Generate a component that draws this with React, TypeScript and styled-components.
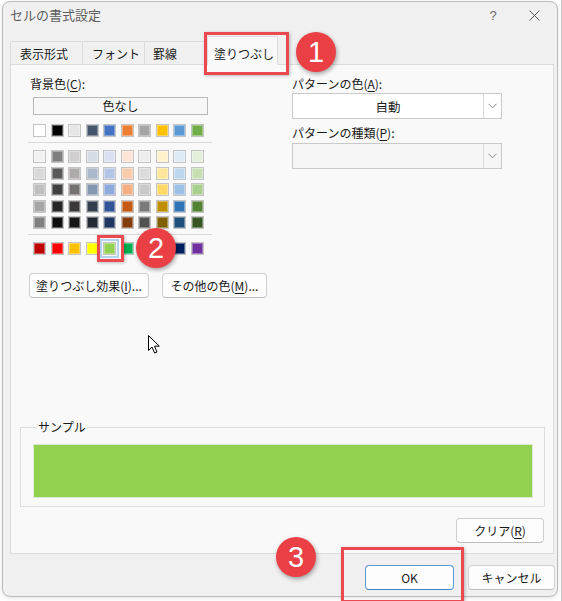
import React from "react";
import styled, { createGlobalStyle } from "styled-components";

const Global = createGlobalStyle`
  html, body { margin: 0; padding: 0; background: #ffffff; }
  body { font-family: "Noto Sans CJK JP", "Noto Sans", sans-serif; font-size: 12px; color: #1a1a1a; }
  * { box-sizing: border-box; }
`;

const Page = styled.div`
  position: relative;
  width: 562px;
  height: 601px;
  overflow: hidden;
  background: #ffffff;
`;

const EdgeLine = styled.div`
  position: absolute;
  right: 0;
  top: 0;
  width: 1px;
  height: 100%;
  background: #c8c8c8;
`;

const Dialog = styled.div`
  margin: 1px 0 0 2px;
  width: 556px;
  height: 596px;
  background: #f0f0f0;
  border: 1px solid #bcbcbc;
  border-radius: 8px;
  display: flex;
  flex-direction: column;
  box-shadow: 0 1px 4px rgba(0, 0, 0, 0.12);
`;

const TitleBar = styled.div`
  height: 26px;
  display: flex;
  align-items: center;
  padding: 0 0 0 7px;
`;

const Title = styled.div`
  flex: 1;
  font-size: 13px;
  color: #5e5e5e;
  line-height: 16px;
`;

const TitleButton = styled.div<{ $w: number }>`
  width: ${(p) => p.$w}px;
  height: 26px;
  display: flex;
  align-items: center;
  justify-content: center;
  color: #6a6a6a;
  font-family: "Liberation Sans", sans-serif;
  font-size: 13px;
`;

const TabStrip = styled.div`
  height: 36px;
  display: flex;
  align-items: flex-end;
  padding-left: 7px;
`;

const Tab = styled.div<{ $w: number; $pl: number; $active?: boolean }>`
  width: ${(p) => p.$w}px;
  height: ${(p) => (p.$active ? 29 : 23)}px;
  display: flex;
  align-items: center;
  white-space: nowrap;
  padding-left: ${(p) => p.$pl}px;
  padding-top: ${(p) => (p.$active ? 5 : 0)}px;
  font-size: 12px;
  color: #1a1a1a;
  background: ${(p) => (p.$active ? "#f9f9f9" : "#f0f0f0")};
  border: 1px solid #dcdcdc;
  border-bottom: none;
  margin-right: -1px;
  position: relative;
  z-index: ${(p) => (p.$active ? 2 : 1)};
  margin-bottom: ${(p) => (p.$active ? -1 : 0)}px;
`;

const Panel = styled.div`
  margin: 0 3px 0 7px;
  flex: 1;
  background: #f9f9f9;
  border: 1px solid #dcdcdc;
  display: flex;
  flex-direction: column;
  padding: 11px 0 10px 0;
`;

const TopGrid = styled.div`
  display: grid;
  grid-template-columns: 262px 210px;
  padding-left: 19px;
`;

const Column = styled.div`
  display: flex;
  flex-direction: column;
`;

const Label = styled.div<{ $mt?: number }>`
  height: 16px;
  line-height: 16px;
  font-size: 12px;
  color: #1a1a1a;
  margin-top: ${(p) => p.$mt ?? 0}px;
  u { text-decoration-thickness: 1px; text-underline-offset: 2px; }
`;

const ColorBlock = styled.div`
  width: 184px;
  margin-left: -2px;
  padding: 0 5px;
  display: flex;
  flex-direction: column;
`;

const NoColorButton = styled.div`
  margin-top: 5px;
  width: 175px;
  height: 18px;
  border: 1px solid #b9b9b9;
  background: #f7f7f7;
  display: flex;
  align-items: center;
  justify-content: center;
  font-size: 12px;
  line-height: 16px;
`;

const SwatchGrid = styled.div<{ $mt: number }>`
  margin-top: ${(p) => p.$mt}px;
  display: grid;
  grid-template-columns: repeat(10, 13px);
  column-gap: 4.5px;
  row-gap: 3.5px;
`;

const Swatch = styled.div<{ $c: string; $sel?: boolean }>`
  width: 13px;
  height: 13px;
  background: ${(p) => p.$c};
  border: 1px solid #c4c4c4;
  box-shadow: inset 0 0 0 1px rgba(255, 255, 255, 0.35);
  ${(p) =>
    p.$sel
      ? `outline: 2px solid #b5d3ee; outline-offset: 1px;`
      : ""}
`;

const Separator = styled.div<{ $mt: number }>`
  margin: ${(p) => p.$mt}px -5px 0 -5px;
  height: 1px;
  background: #dadada;
`;

const ButtonRow = styled.div`
  margin-top: 18px;
  margin-left: -1px;
  display: flex;
  gap: 13px;
`;

const Button = styled.div<{ $w: number; $h?: number; $primary?: boolean }>`
  width: ${(p) => p.$w}px;
  height: ${(p) => p.$h ?? 25}px;
  background: #fdfdfd;
  border: 1px solid ${(p) => (p.$primary ? "#5a9ad6" : "#d0d0d0")};
  border-bottom-color: ${(p) => (p.$primary ? "#3f86cc" : "#bdbdbd")};
  border-radius: 4px;
  display: flex;
  align-items: center;
  justify-content: center;
  white-space: nowrap;
  font-size: 12px;
  line-height: 16px;
  color: #1a1a1a;
  u { text-decoration-thickness: 1px; text-underline-offset: 2px; }
`;

const Select = styled.div<{ $disabled?: boolean; $mt: number }>`
  margin-top: ${(p) => p.$mt}px;
  width: 210px;
  height: 26px;
  display: flex;
  background: ${(p) => (p.$disabled ? "#f6f6f6" : "#ffffff")};
  border: 1px solid #c9c9c9;
`;

const SelectValue = styled.div`
  flex: 1;
  display: flex;
  align-items: center;
  justify-content: center;
  font-size: 12.5px;
  padding-top: 1px;
`;

const SelectArrow = styled.div`
  width: 18px;
  border-left: 1px solid #dadada;
  display: flex;
  align-items: center;
  justify-content: center;
`;

const Spacer = styled.div`
  flex: 1;
`;

const SampleBox = styled.fieldset`
  margin: 0 8px 0 9px;
  border: 1px solid #dedede;
  padding: 9px 11px 8px 12px;
  min-width: 0;
`;

const SampleLegend = styled.legend`
  margin-left: 4px;
  padding: 0 1px;
  font-size: 12px;
  line-height: 16px;
  color: #1a1a1a;
`;

const SampleFill = styled.div`
  height: 54px;
  background: #92d050;
  border: 1px solid #dde8d2;
`;

const ClearRow = styled.div`
  margin-top: 11px;
  display: flex;
  justify-content: flex-end;
  padding-right: 9px;
`;

const Footer = styled.div`
  height: 42px;
  display: flex;
  justify-content: flex-end;
  align-items: flex-start;
  padding: 11px 2px 0 0;
  gap: 14px;
`;

const Badge = styled.div<{ $x: number; $y: number }>`
  position: absolute;
  left: ${(p) => p.$x - 20}px;
  top: ${(p) => p.$y - 20}px;
  width: 40px;
  height: 40px;
  border-radius: 50%;
  background: #ea4045;
  color: #ffffff;
  display: flex;
  align-items: center;
  justify-content: center;
  font-family: "Liberation Sans", "Noto Sans", sans-serif;
  font-size: 29px;
  line-height: 1;
  box-shadow: 1px 2px 4px rgba(0, 0, 0, 0.35);
  z-index: 10;
`;

const RedFrame = styled.div<{ $x: number; $y: number; $w: number; $h: number }>`
  position: absolute;
  left: ${(p) => p.$x}px;
  top: ${(p) => p.$y}px;
  width: ${(p) => p.$w}px;
  height: ${(p) => p.$h}px;
  border: 3px solid #ea4a4f;
  box-shadow: 1px 1px 3px rgba(0, 0, 0, 0.25);
  z-index: 9;
`;

const Cursor = styled.svg`
  position: absolute;
  left: 148px;
  top: 335px;
  z-index: 10;
`;

const theme = ["#ffffff", "#000000", "#e7e6e6", "#44546a", "#4472c4", "#ed7d31", "#a5a5a5", "#ffc000", "#5b9bd5", "#70ad47"];
const tints = [
  ["#f2f2f2", "#7f7f7f", "#d0cece", "#d6dce4", "#d9e1f2", "#fce4d6", "#ededed", "#fff2cc", "#ddebf7", "#e2efda"],
  ["#d9d9d9", "#595959", "#aeaaaa", "#acb9ca", "#b4c6e7", "#f8cbad", "#dbdbdb", "#ffe699", "#bdd7ee", "#c6e0b4"],
  ["#bfbfbf", "#404040", "#757171", "#8497b0", "#8ea9db", "#f4b084", "#c9c9c9", "#ffd966", "#9bc2e6", "#a9d08e"],
  ["#a6a6a6", "#262626", "#3a3838", "#333f4f", "#305496", "#c65911", "#7b7b7b", "#bf8f00", "#2f75b5", "#548235"],
  ["#808080", "#0d0d0d", "#161616", "#222b35", "#203764", "#833c0c", "#525252", "#806000", "#1f4e78", "#375623"],
];
const standard = ["#c00000", "#ff0000", "#ffc000", "#ffff00", "#92d050", "#00b050", "#00b0f0", "#0070c0", "#002060", "#7030a0"];

const Chevron = () => (
  <svg width="9" height="6" viewBox="0 0 9 6">
    <polyline points="0.5,0.8 4.5,4.8 8.5,0.8" fill="none" stroke="#8a8a8a" strokeWidth="1" />
  </svg>
);

export default function App() {
  return (
    <Page>
      <Global />
      <EdgeLine />
      <Dialog>
        <TitleBar>
          <Title>セルの書式設定</Title>
          <TitleButton $w={36}>?</TitleButton>
          <TitleButton $w={46}>
            <svg width="11" height="11" viewBox="0 0 11 11">
              <path d="M0.5 0.5 L10.5 10.5 M10.5 0.5 L0.5 10.5" stroke="#555" strokeWidth="1" />
            </svg>
          </TitleButton>
        </TitleBar>
        <TabStrip>
          <Tab $w={73} $pl={9}>表示形式</Tab>
          <Tab $w={63} $pl={9}>フォント</Tab>
          <Tab $w={64} $pl={8}>罫線</Tab>
          <Tab $w={71} $pl={6} $active>塗りつぶし</Tab>
        </TabStrip>
        <Panel>
          <TopGrid>
            <Column>
              <Label>背景色(<u>C</u>):</Label>
              <ColorBlock>
                <NoColorButton>色なし</NoColorButton>
                <SwatchGrid $mt={9}>
                  {theme.map((c, i) => (
                    <Swatch key={i} $c={c} />
                  ))}
                </SwatchGrid>
                <Separator $mt={5} />
                <SwatchGrid $mt={7}>
                  {tints.flat().map((c, i) => (
                    <Swatch key={i} $c={c} />
                  ))}
                </SwatchGrid>
                <Separator $mt={5} />
                <SwatchGrid $mt={7}>
                  {standard.map((c, i) => (
                    <Swatch key={i} $c={c} $sel={i === 4} />
                  ))}
                </SwatchGrid>
              </ColorBlock>
              <ButtonRow>
                <Button $w={120}>塗りつぶし効果(<u>I</u>)...</Button>
                <Button $w={105}>その他の色(<u>M</u>)...</Button>
              </ButtonRow>
            </Column>
            <Column>
              <Label>パターンの色(<u>A</u>):</Label>
              <Select $mt={1}>
                <SelectValue>自動</SelectValue>
                <SelectArrow>
                  <Chevron />
                </SelectArrow>
              </Select>
              <Label $mt={6}>パターンの種類(<u>P</u>):</Label>
              <Select $mt={2} $disabled>
                <SelectValue />
                <SelectArrow>
                  <Chevron />
                </SelectArrow>
              </Select>
            </Column>
          </TopGrid>
          <Spacer />
          <SampleBox>
            <SampleLegend>サンプル</SampleLegend>
            <SampleFill />
          </SampleBox>
          <ClearRow>
            <Button $w={88}>クリア(<u>R</u>)</Button>
          </ClearRow>
        </Panel>
        <Footer>
          <Button $w={89} $primary>OK</Button>
          <Button $w={87}>キャンセル</Button>
        </Footer>
      </Dialog>

      <RedFrame $x={204} $y={32} $w={85} $h={43} />
      <Badge $x={316} $y={52}>1</Badge>
      <RedFrame $x={97} $y={235} $w={27} $h={27} />
      <Badge $x={156} $y={248}>2</Badge>
      <RedFrame $x={341} $y={547} $w={123} $h={56} />
      <Badge $x={296} $y={557}>3</Badge>

      <Cursor width="13" height="19" viewBox="0 0 13 19">
        <path d="M0.5 0.5 L0.5 15.5 L4 12 L6.6 18 L9 17 L6.5 11.2 L11.3 11.2 Z" fill="#ffffff" stroke="#000000" strokeWidth="1" strokeLinejoin="round" />
      </Cursor>
    </Page>
  );
}
